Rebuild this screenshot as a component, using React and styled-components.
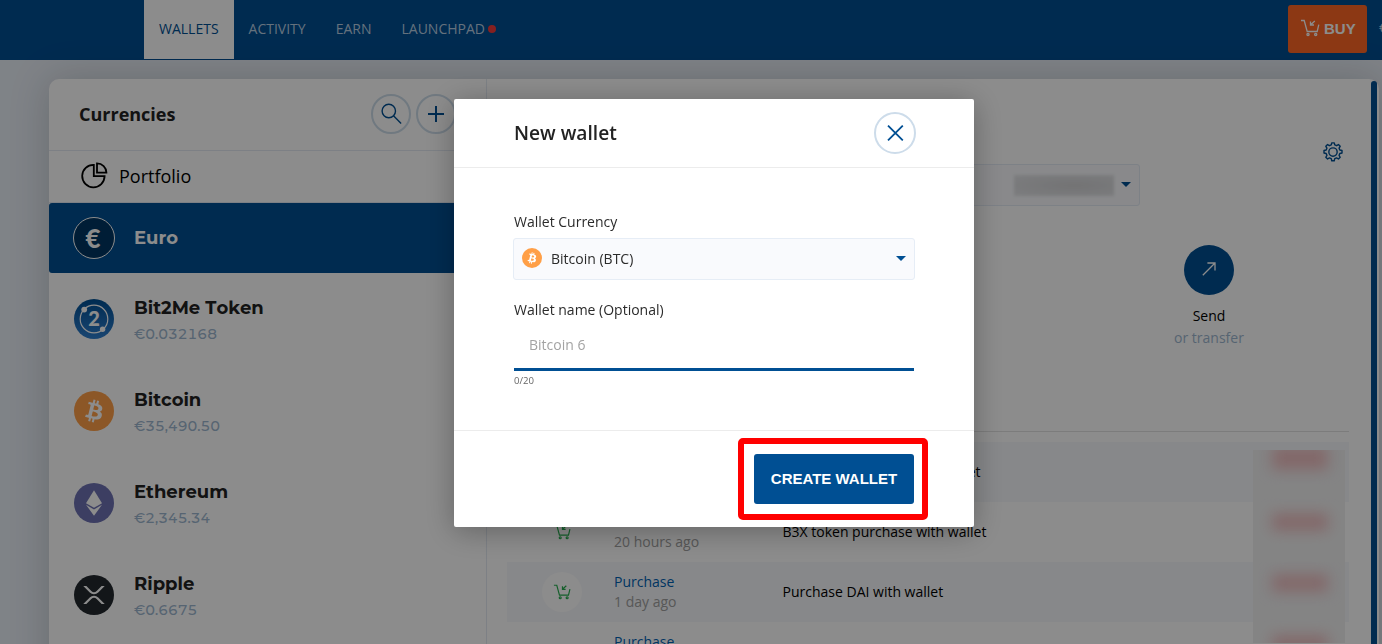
import React, { useState } from "react";
import styled, { createGlobalStyle } from "styled-components";

const currencies = [
  { id: "eur", name: "Euro", icon: <EuroIcon />, active: true },
  { id: "b2m", name: "Bit2Me Token", price: "€0.032168", icon: <Bit2MeIcon /> },
  { id: "btc", name: "Bitcoin", price: "€35,490.50", icon: <BitcoinIcon /> },
  { id: "eth", name: "Ethereum", price: "€2,345.34", icon: <EthereumIcon /> },
  { id: "xrp", name: "Ripple", price: "€0.6675", icon: <RippleIcon /> },
];

const movements = [
  { id: 1, when: "20 hours ago", text: "B2M tokens traded with wallet" },
  { id: 2, when: "20 hours ago", text: "B3X token purchase with wallet" },
  { id: 3, when: "1 day ago", text: "Purchase DAI with wallet" },
  { id: 4, when: "1 day ago", text: "Purchase with wallet" },
];

function App() {
  const [name, setName] = useState("");

  return (
    <Page>
      <GlobalStyle />
      <NavBar>
        <NavLink $active>WALLETS</NavLink>
        <NavLink>ACTIVITY</NavLink>
        <NavLink>EARN</NavLink>
        <NavLink>
          LAUNCHPAD
          <Dot />
        </NavLink>
        <BuyButton>
          <CartIcon size={20} />
          BUY
        </BuyButton>
        <Balance>€</Balance>
      </NavBar>

      <Panel>
        <Sidebar>
          <SidebarHeader>
            <SidebarTitle>Currencies</SidebarTitle>
            <RoundButton>
              <SearchIcon />
            </RoundButton>
            <RoundButton>
              <PlusIcon />
            </RoundButton>
          </SidebarHeader>
          <Portfolio>
            <PieIcon />
            Portfolio
          </Portfolio>
          {currencies.map((c) => (
            <Currency key={c.id} $active={c.active}>
              {c.icon}
              <CurrencyText>
                <CurrencyName $active={c.active}>{c.name}</CurrencyName>
                {c.price && <Price>{c.price}</Price>}
              </CurrencyText>
            </Currency>
          ))}
        </Sidebar>

        <Content>
          <SettingsRow>
            <GearIcon />
          </SettingsRow>
          <WalletSelect>
            <HiddenBalance />
            <Caret />
          </WalletSelect>
          <Actions>
            <Action>
              <ActionCircle>
                <SendIcon />
              </ActionCircle>
              <ActionTitle>Send</ActionTitle>
              <ActionHint>or transfer</ActionHint>
            </Action>
          </Actions>
          <Movements>
            {movements.map((m) => (
              <Movement key={m.id}>
                <MovementIcon>
                  <CartIcon size={18} />
                </MovementIcon>
                <MovementType>
                  <TypeName>Purchase</TypeName>
                  <When>{m.when}</When>
                </MovementType>
                <Description>{m.text}</Description>
              </Movement>
            ))}
            <HiddenAmounts>
              <HiddenAmount />
              <HiddenAmount />
              <HiddenAmount />
              <HiddenAmount />
            </HiddenAmounts>
          </Movements>
        </Content>
        <ScrollBar />
      </Panel>

      <Overlay>
        <Modal>
          <ModalHeader>
            <ModalTitle>New wallet</ModalTitle>
            <CloseButton>
              <CloseIcon />
            </CloseButton>
          </ModalHeader>
          <ModalBody>
            <Label>Wallet Currency</Label>
            <CurrencySelect>
              <BitcoinIcon size={20} />
              <SelectValue>Bitcoin (BTC)</SelectValue>
              <Caret />
            </CurrencySelect>
            <Label>Wallet name (Optional)</Label>
            <NameInput
              placeholder="Bitcoin 6"
              maxLength={20}
              value={name}
              onChange={(e) => setName(e.target.value)}
            />
            <Counter>{name.length}/20</Counter>
          </ModalBody>
          <ModalFooter>
            <Highlighted>
              <CreateButton>CREATE WALLET</CreateButton>
            </Highlighted>
          </ModalFooter>
        </Modal>
      </Overlay>
    </Page>
  );
}

function CartIcon({ size }) {
  return (
    <svg width={size} height={size} viewBox="0 0 20 20" fill="none" stroke="currentColor" strokeWidth="1.3">
      <path d="M1 2.5h3.2l3 11h10l1.6-6.8" />
      <path d="M14.8 3l-4.3 4M10.5 3.6V7H14" />
      <circle cx="8" cy="16.4" r="1.1" />
      <circle cx="15.7" cy="16.4" r="1.1" />
    </svg>
  );
}

function SearchIcon() {
  return (
    <svg width="22" height="22" viewBox="0 0 22 22" fill="none" stroke="#004f93" strokeWidth="1.4">
      <circle cx="8.8" cy="8" r="6.7" />
      <path d="M13.5 12.8l7.6 7.6" />
    </svg>
  );
}

function PlusIcon() {
  return (
    <svg width="16" height="16" viewBox="0 0 16 16" stroke="#004f93" strokeWidth="2">
      <path d="M8 0v16M0 8h16" />
    </svg>
  );
}

function CloseIcon() {
  return (
    <svg width="18" height="16" viewBox="0 0 18 16" stroke="#004f93" strokeWidth="1.8">
      <path d="M2 .6l14.8 14.8M16.8 .6L2 15.4" />
    </svg>
  );
}

function PieIcon() {
  return (
    <svg width="28" height="28" viewBox="0 0 28 28" fill="none" stroke="#000" strokeWidth="1.8">
      <path d="M13.8 2.9a11.2 11.2 0 1 0 10.8 11.2H13.8z" />
      <path d="M17 1.4v9.2h9.4A9.4 9.2 0 0 0 17 1.4z" />
    </svg>
  );
}

function GearIcon() {
  return (
    <svg width="20" height="20" viewBox="0 0 24 24" fill="none" stroke="#004f93" strokeWidth="1.7">
      <path
        strokeLinejoin="round"
        d="M9.9 3.5 10.5 1h3l.6 2.5 2.2.9 2.2-1.3 2.1 2.1-1.3 2.2.9 2.2 2.6.6v3l-2.6.6-.9 2.2 1.3 2.3-2.1 2.1-2.2-1.3-2.2.9-.6 2.5h-3l-.6-2.5-2.2-.9-2.2 1.3-2.1-2.1 1.3-2.3-.9-2.2-2.6-.6v-3l2.6-.6.9-2.2-1.3-2.2 2.1-2.1 2.2 1.3z"
      />
      <circle cx="12" cy="12" r="5" />
    </svg>
  );
}

function SendIcon() {
  return (
    <svg width="14" height="14" viewBox="0 0 14 14" fill="none" stroke="#fff" strokeWidth="1.3">
      <path d="M.8 13.2L13 1M5.4 1H13v7.4" />
    </svg>
  );
}

function EuroIcon() {
  return <CoinText $bg="#003663">€</CoinText>;
}

function Bit2MeIcon() {
  return (
    <svg width="40" height="40" viewBox="0 0 40 40">
      <defs>
        <linearGradient id="b2m" x1="0" y1="0" x2="0" y2="1">
          <stop offset="0" stopColor="#004f93" />
          <stop offset="1" stopColor="#2f7fcf" />
        </linearGradient>
      </defs>
      <circle cx="20" cy="20" r="20" fill="url(#b2m)" />
      <circle cx="20" cy="20" r="13.8" fill="none" stroke="#fff" strokeWidth="1.2" />
      <circle cx="10.2" cy="10.6" r="2.9" fill="#fff" />
      <circle cx="28.6" cy="30.2" r="2.7" fill="#fff" />
      <text x="20" y="27" textAnchor="middle" fontFamily="Lato, sans-serif" fontWeight="900" fontSize="20" fill="#fff">
        2
      </text>
    </svg>
  );
}

function BitcoinIcon({ size = 40 }) {
  return (
    <svg width={size} height={size} viewBox="0 0 32 32">
      <circle cx="16" cy="16" r="16" fill="#ff9f47" />
      <path
        fill="#fff"
        transform="translate(1.3 1.3) scale(.92)"
        d="M23.189 14.02c.314-2.096-1.283-3.223-3.465-3.975l.708-2.84-1.728-.43-.69 2.765c-.454-.114-.92-.22-1.385-.326l.695-2.783L15.596 6l-.708 2.839c-.376-.086-.746-.17-1.104-.26l.002-.009-2.384-.595-.46 1.846s1.283.294 1.256.312c.7.175.826.638.805 1.006l-.806 3.235c.048.012.11.03.18.057l-.183-.045-1.13 4.532c-.086.212-.303.531-.793.41.018.025-1.256-.313-1.256-.313l-.858 1.978 2.25.561c.418.105.828.215 1.231.318l-.715 2.872 1.727.43.708-2.84c.472.127.93.245 1.378.357l-.706 2.828 1.728.43.715-2.866c2.948.558 5.164.333 6.097-2.333.752-2.146-.037-3.385-1.588-4.192 1.13-.26 1.98-1.003 2.207-2.538zm-3.95 5.538c-.533 2.147-4.148.986-5.32.695l.95-3.805c1.172.293 4.929.872 4.37 3.11zm.535-5.569c-.487 1.953-3.495.96-4.47.717l.86-3.45c.975.243 4.118.696 3.61 2.733z"
      />
    </svg>
  );
}

function EthereumIcon() {
  return (
    <svg width="40" height="40" viewBox="0 0 40 40">
      <circle cx="20" cy="20" r="20" fill="#6e72b3" />
      <path fill="#fff" d="M20 7.3l8 12.9-8 4.6-8-4.6z" />
      <path fill="#fff" d="M12 21.8l8 4.6 8-4.6-8 11z" />
    </svg>
  );
}

function RippleIcon() {
  return (
    <svg width="40" height="40" viewBox="0 0 32 32">
      <circle cx="16" cy="16" r="16" fill="#23292f" />
      <path
        fill="#fff"
        transform="translate(2.24 2) scale(.86)"
        d="M23.07 8h2.89l-6.015 5.957a5.621 5.621 0 01-7.89 0L6.035 8H8.93l4.57 4.523a3.556 3.556 0 004.996 0L23.07 8zM8.895 24.563H6l6.055-5.993a5.621 5.621 0 017.89 0L26 24.563h-2.895L18.5 20a3.556 3.556 0 00-4.996 0l-4.61 4.563z"
      />
    </svg>
  );
}

const GlobalStyle = createGlobalStyle`
  * {
    box-sizing: border-box;
  }

  body {
    margin: 0;
    font-family: "Open Sans", "Noto Sans", sans-serif;
    font-size: 14px;
    color: #000;
  }
`;

const Page = styled.div`
  height: 644px;
  overflow: hidden;
  background-color: #e8eef6;
`;

const NavBar = styled.div`
  display: flex;
  height: 60px;
  padding-left: 144px;
  background-color: #004f93;
  overflow: hidden;
`;

const NavLink = styled.div`
  display: flex;
  align-items: center;
  height: 59px;
  padding: 0 15px 2px;
  background-color: ${(props) => (props.$active ? "#fff" : "transparent")};
  color: ${(props) => (props.$active ? "#004f93" : "#b8cee2")};
`;

const Dot = styled.span`
  width: 8px;
  height: 8px;
  margin: 1px 0 0 3px;
  border-radius: 50%;
  background-color: #f23b3b;
`;

const BuyButton = styled.button`
  display: flex;
  align-items: center;
  gap: 4px;
  width: 79px;
  height: 48px;
  margin: 5px 12px 0 auto;
  padding: 0 0 2px 12px;
  border: none;
  border-radius: 3px;
  background-color: #ff6726;
  color: #fff;
  font: bold 15px "Liberation Sans", Arial, sans-serif;
  flex-shrink: 0;
`;

const Balance = styled.span`
  width: 3px;
  color: #b8cee2;
  line-height: 55px;
  flex-shrink: 0;
`;

const Panel = styled.div`
  display: flex;
  width: 1330px;
  height: 700px;
  margin: 19px 0 0 49px;
  border-radius: 10px;
  background-color: #fff;
  box-shadow: 0 0 40px rgba(0, 0, 0, 0.18);
`;

const Sidebar = styled.div`
  width: 438px;
  border-right: 1px solid #e4eaf3;
  flex-shrink: 0;
`;

const SidebarHeader = styled.div`
  display: flex;
  align-items: center;
  gap: 5px;
  height: 72px;
  padding: 0 30px 2px;
  border-bottom: 1px solid #e4eaf3;
`;

const SidebarTitle = styled.h2`
  flex: 1;
  margin: 0;
  font-size: 18px;
  font-weight: 700;
  color: #222;
`;

const RoundButton = styled.button`
  display: flex;
  align-items: center;
  justify-content: center;
  width: 40px;
  height: 40px;
  padding: 0;
  border: 2px solid #cddcea;
  border-radius: 50%;
  background-color: transparent;
`;

const Portfolio = styled.div`
  display: flex;
  align-items: center;
  gap: 11px;
  height: 52px;
  padding: 0 31px 2px;
  border-bottom: 1px solid #e4eaf3;
  font-size: 18px;
`;

const Currency = styled.div`
  display: flex;
  align-items: center;
  gap: ${(props) => (props.$active ? "19px" : "20px")};
  height: ${(props) => (props.$active ? "70px" : "92px")};
  padding-left: ${(props) => (props.$active ? "24px" : "25px")};
  border-radius: 3px;
  background-color: ${(props) => (props.$active ? "#004f93" : "transparent")};
`;

const CurrencyText = styled.div`
  font-family: Montserrat, Inter, sans-serif;
  font-kerning: none;
`;

const CurrencyName = styled.div`
  font-size: 18px;
  line-height: 24px;
  font-weight: 700;
  color: ${(props) => (props.$active ? "#fff" : "#222")};
`;

const Price = styled.div`
  margin: 2px 0 -4px;
  font-size: 14px;
  font-weight: 500;
  line-height: 24px;
  font-variant-numeric: tabular-nums;
  color: #9db7cf;
`;

const CoinText = styled.div`
  width: 42px;
  height: 42px;
  border: 1px solid #fff;
  border-radius: 50%;
  background-color: ${(props) => props.$bg};
  color: #fff;
  font: 900 26px/40px Lato, sans-serif;
  text-align: center;
  text-indent: -2px;
`;

const Content = styled.div`
  flex: 1;
  padding: 0 22px 0 20px;
`;

const SettingsRow = styled.div`
  display: flex;
  justify-content: flex-end;
  height: 85px;
  padding: 63px 6px 0 0;
`;

const WalletSelect = styled.div`
  display: flex;
  align-items: center;
  justify-content: flex-end;
  gap: 7px;
  width: 633px;
  height: 42px;
  padding: 0 8px 1px 0;
  border: 1px solid #e4ebf5;
  border-radius: 3px;
  background-color: #f9fafd;
`;

const HiddenBalance = styled.div`
  width: 100px;
  height: 21px;
  margin-top: 1px;
  background: radial-gradient(ellipse at 60% 50%, #d2d2d4, #dcdde0 60%, #e4e5e8);
  filter: blur(1.5px);
`;

const Caret = styled.span`
  width: 0;
  height: 0;
  border-left: 5px solid transparent;
  border-right: 5px solid transparent;
  border-top: 5px solid #004f93;
`;

const Actions = styled.div`
  display: flex;
  justify-content: flex-end;
  height: 226px;
  padding: 39px 90px 0 0;
  border-bottom: 1px solid #e2e2e2;
`;

const Action = styled.div`
  display: flex;
  flex-direction: column;
  align-items: center;
  width: 100px;
  line-height: 22px;
`;

const ActionCircle = styled.div`
  display: flex;
  align-items: center;
  justify-content: center;
  width: 50px;
  height: 50px;
  margin-bottom: 10px;
  padding-bottom: 2px;
  border-radius: 50%;
  background-color: #004f93;
`;

const ActionTitle = styled.div`
  color: #000;
`;

const ActionHint = styled.div`
  color: #9db7cf;
`;

const Movements = styled.div`
  position: relative;
  padding-top: 10px;
`;

const Movement = styled.div`
  display: grid;
  grid-template-columns: 107px 168.5px 1fr;
  align-items: center;
  height: 60px;

  &:nth-child(odd) {
    background-color: #f6f8fb;
  }
`;

const MovementIcon = styled.div`
  display: flex;
  align-items: center;
  justify-content: center;
  width: 40px;
  height: 40px;
  margin-left: 35px;
  border-radius: 50%;
  background-color: #fff;
  color: #27ae4f;
`;

const MovementType = styled.div`
  line-height: 20px;
`;

const TypeName = styled.div`
  color: #0062b3;
`;

const When = styled.div`
  color: #a0a0a0;
`;

const Description = styled.div`
  padding-bottom: 2px;
  color: #000;
`;

/* blurred block that covers the amounts column */
const HiddenAmounts = styled.div`
  position: absolute;
  top: 18px;
  right: 4px;
  width: 92px;
  height: 193px;
  background-color: rgba(238, 238, 238, 0.85);
  overflow: hidden;
`;

const HiddenAmount = styled.div`
  width: 56px;
  height: 18px;
  margin: 1px 0 43px 19px;
  background-color: #edbec0;
  filter: blur(7px);

  &:first-child {
    height: 24px;
    margin: -4px 0 43px 19px;
  }
`;

const ScrollBar = styled.div`
  width: 6px;
  margin: 2px 2px 0 0;
  border-radius: 3px;
  background-color: #004f93;
`;

const Overlay = styled.div`
  position: fixed;
  inset: 0;
  display: flex;
  align-items: flex-start;
  padding: 99px 0 0 454px;
  background-color: rgba(0, 0, 0, 0.45);
`;

const Modal = styled.div`
  width: 520px;
  height: 428px;
  border-radius: 2px;
  background-color: #fff;
  box-shadow: 0 4px 30px rgba(0, 0, 0, 0.3);
`;

const ModalHeader = styled.div`
  display: flex;
  align-items: center;
  justify-content: space-between;
  height: 69px;
  padding: 0 58px 0 60px;
  border-bottom: 1px solid #ececec;
`;

const ModalTitle = styled.h3`
  margin: 0;
  padding-bottom: 2px;
  font-size: 19.2px;
  font-weight: 600;
  color: #222;
`;

const CloseButton = styled(RoundButton)`
  width: 42px;
  height: 42px;
`;

const ModalBody = styled.div`
  height: 262px;
  padding: 43px 60px 0;
`;

const Label = styled.div`
  line-height: 22px;
  color: #2b2b2b;
`;

const CurrencySelect = styled.div`
  display: flex;
  align-items: center;
  gap: 9px;
  height: 42px;
  margin: 5px -1px 19px;
  padding: 0 8px 2px;
  border: 1px solid #e6edf6;
  border-radius: 3px;
  background-color: #f9fafd;
`;

const SelectValue = styled.span`
  flex: 1;
  color: #2b2b2b;
`;

const NameInput = styled.input`
  display: block;
  width: 100%;
  height: 50px;
  padding: 0 15px;
  border: none;
  border-bottom: 3px solid #004f93;
  outline: none;
  font-family: inherit;
  font-size: 14px;

  &::placeholder {
    color: #a3a3a3;
  }
`;

const Counter = styled.div`
  font-size: 9.6px;
  line-height: 19px;
  color: #666;
`;

const ModalFooter = styled.div`
  display: flex;
  justify-content: flex-end;
  height: 97px;
  padding: 23px 60px 0 0;
  border-top: 1px solid #ececec;
`;

const Highlighted = styled.div`
  position: relative;
  height: 50px;

  &::after {
    content: "";
    position: absolute;
    inset: -16px -14px -16px -16px;
    border: 6px solid #f00;
    border-radius: 5px;
  }
`;

const CreateButton = styled.button`
  width: 160px;
  height: 50px;
  padding: 0 0 2px;
  border: none;
  border-radius: 3px;
  background-color: #004f93;
  color: #fff;
  font: bold 15px "Liberation Sans", Arial, sans-serif;
`;

export default App;
